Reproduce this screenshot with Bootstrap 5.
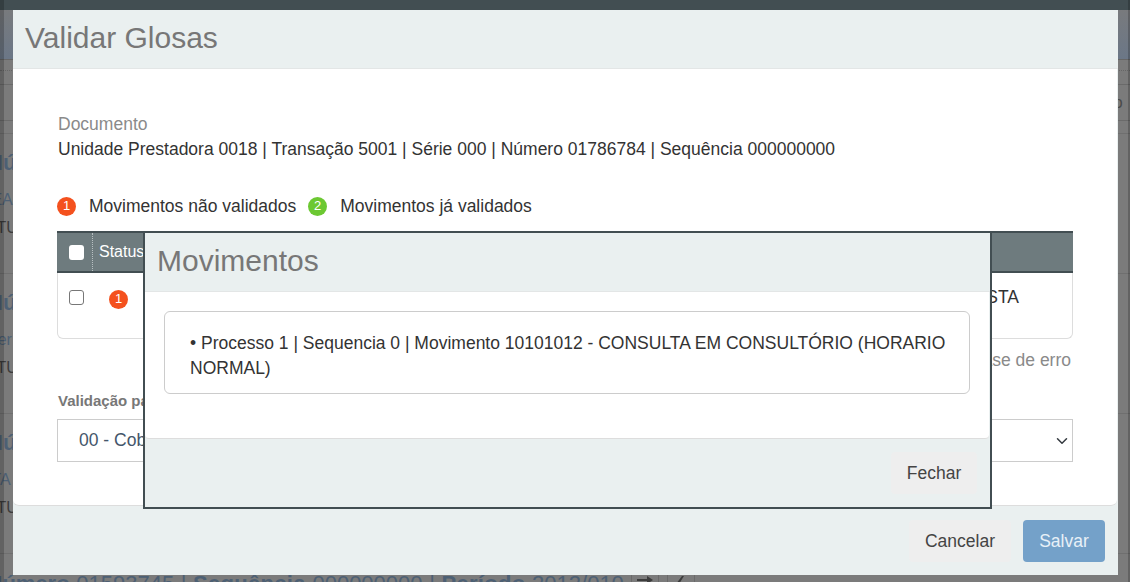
<!DOCTYPE html>
<html lang="pt-BR">
<head>
    <meta charset="UTF-8">
    <title>Validar Glosas</title>
    <link href="https://cdn.jsdelivr.net/npm/bootstrap@5.3.0/dist/css/bootstrap.min.css" rel="stylesheet">
    <style>
        html, body { height: 582px; overflow: hidden; }
        body { font-family: "Liberation Sans", Arial, sans-serif; font-size: 17.5px; color: #333; background: #7b7b7b; }

        /* page behind the dialogs */
        .page-behind { height: 582px; overflow: hidden; color: #4d6074; background: #7b7b7b; }
        .page-top { height: 60px; background: linear-gradient(#7b7b7b, #6b7787); border-bottom: 1px solid #666; }
        .bar-a { height: 11px; border-bottom: 1px dotted #666; }
        .bar-b { height: 14px; border-bottom: 1px solid #6a6a6a; }
        .bar-c { height: 36px; border-bottom: 1px solid #6a6a6a; text-align: right; padding-right: 3px; line-height: 36px; font-size: 16px; color: #4a4a4a; }
        .bar-d { height: 13px; border-bottom: 1px solid #6f6f6f; }
        .behind-row { height: 140px; padding-top: 16px; border-bottom: 1px solid #6f6f6f; margin-left: -13px; white-space: nowrap; }
        .behind-title { font-size: 22px; font-weight: 700; line-height: 26px; }
        .behind-line { font-size: 16px; line-height: 28px; }
        .behind-line.first { margin-top: 10px; }
        .behind-line.dark { color: #3c3c3c; }
        .behind-foot { margin: 18px 0 0 -13.5px; font-size: 22px; line-height: 24px; white-space: nowrap; display: flex; align-items: center; word-spacing: .5px; }
        .wide-bold { letter-spacing: .3px; }
        .foot-tool { width: 28px; height: 24px; border: 1px solid #6a6a6a; border-width: 0 1px; margin-left: 7px; display: inline-flex; align-items: flex-start; justify-content: center; padding-top: 4px; color: #3c3c3c; }

        .top-strip { position: fixed; top: 0; left: 0; width: 1130px; height: 10px; background: #424e52; }
        .edge-left { position: fixed; top: 0; left: 0; width: 4px; height: 582px; background: rgba(0, 0, 0, .2); }
        .edge-right { position: fixed; top: 0; left: 1128px; width: 2px; height: 582px; background: rgba(0, 0, 0, .2); }

        /* outer dialog */
        .dlg-outer { position: fixed; left: 13px; top: 10px; width: 1105px; height: 565px; background: #eaf0f0; display: flex; flex-direction: column; }
        .dlg-head { height: 59px; padding: 9px 12px; border-bottom: 1px solid #e3e6e6; flex: none; }
        .dlg-title { margin: 0; font-size: 30px; line-height: 38px; font-weight: 400; color: #777; }
        .dlg-body { height: 437px; flex: none; background: #fff; margin-right: 1px; border-radius: 0 0 6px 6px; border-bottom: 1px solid #ddd; padding: 45px 44px 0 44px; }
        .dlg-foot { flex: 1; padding: 14px 13px 0 0; }

        .doc-label { color: #8a8a8a; line-height: 20px; padding-left: 1px; }
        .doc-line { line-height: 26px; color: #333; margin-top: 2px; padding-left: 1px; }
        .legend-row { margin-top: 31px; height: 26px; }
        .legend-label { margin: 0 12px 0 13px; }
        .count-dot { width: 19px; height: 19px; border-radius: 50%; color: #fff; font-size: 13px; line-height: 18px; text-align: center; flex: none; }
        .dot-red { background: #f4511e; }
        .dot-green { background: #6cc832; }

        .move-table { margin-top: 12px; height: 108px; border: 1px solid #ddd; border-top: 0; border-radius: 0 0 6px 6px; }
        .move-table-head { height: 42px; background: #6e7b7e; border-top: 2px solid #424e52; border-bottom: 2px solid #424e52; color: #fff; margin: 0 -1px; }
        .cell-check { width: 36px; padding-left: 12px; border-right: 1px dotted #b8c0c2; }
        .cell-status { padding-left: 6px; line-height: 38px; font-size: 16px; }
        .fake-box { width: 15px; height: 15px; border-radius: 3px; flex: none; }
        .box-white { background: #fff; }
        .box-empty { background: #fff; border: 1px solid #777; margin-left: 11px; }
        .move-row { padding-top: 17px; }
        .dot-row { margin-left: 25px; }
        .row-text { margin-left: auto; padding-right: 53px; line-height: 20px; margin-top: -3px; }
        .err-link { text-align: right; color: #8a8a8a; line-height: 20px; margin-top: 11px; padding-right: 2px; }
        .field-label { font-size: 15px; font-weight: 700; color: #777; line-height: 20px; margin-top: 21px; padding-left: 1px; }
        .dlg-select.form-select { margin-top: 8px; height: 43px; border-radius: 0; border: 1px solid #ccc; color: #44566a; padding-left: 21px; font-size: 17.5px; background-position: right 3px center; background-size: 14px 12px; }

        .btn-soft { background: #eeeeee; color: #444; border: 0; width: 102px; height: 42px; border-radius: 4px; font-size: 17.5px; padding: 0; }
        .btn-save { background: #74a1c9; color: #e8f0f7; border: 0; width: 82px; height: 42px; border-radius: 4px; font-size: 17.5px; padding: 0; }

        /* inner dialog */
        .dlg-inner { position: fixed; left: 143px; top: 231px; width: 849px; height: 278px; background: #eaf0f0; border: 2px solid #424e52; display: flex; flex-direction: column; }
        .inner-head { height: 59px; padding: 9px 12px; border-bottom: 1px solid #e3e6e6; flex: none; }
        .inner-body { height: 147px; flex: none; background: #fff; border-bottom: 1px solid #ddd; border-radius: 0 0 4px 4px; margin-right: 1px; padding: 19px 19px 0 19px; }
        .inner-box { height: 83px; border: 1px solid #ccc; border-radius: 6px; padding: 19px 15px 0 25px; line-height: 25px; color: #333; }
        .inner-foot { flex: 1; padding: 13px 13px 0 0; }
        .btn-close-soft { width: 86px; }
    </style>
</head>
<body>
    <div class="page-behind">
        <div class="page-top"></div>
        <div class="bar-a"></div>
        <div class="bar-b"></div>
        <div class="bar-c">Usuário&nbsp;</div>
        <div class="bar-d"></div>
        <div class="behind-row">
            <div class="behind-title">Número</div>
            <div class="behind-line first">&nbsp;EA</div>
            <div class="behind-line dark">ATUAL</div>
        </div>
        <div class="behind-row">
            <div class="behind-title">Número</div>
            <div class="behind-line first">Ser</div>
            <div class="behind-line dark">ATUAL</div>
        </div>
        <div class="behind-row">
            <div class="behind-title">Número</div>
            <div class="behind-line first">&nbsp;TA</div>
            <div class="behind-line dark">ATUAL</div>
        </div>
        <div class="behind-foot">
            <span><b>Número</b> 01593745 | <b class="wide-bold">Sequência</b> 000000000 | <b class="wide-bold">Período</b> 2012/010</span>
            <span class="foot-tool"><svg width="16" height="8" viewBox="0 0 16 8"><path d="M0 3h10V0l6 4-6 4V5H0z" fill="currentColor"/></svg></span>
            <span class="foot-tool ms-2"><svg width="12" height="8" viewBox="0 0 12 8"><path d="M1 8 7 0h2L4 8z" fill="currentColor"/></svg></span>
        </div>
    </div>
    <div class="top-strip"></div>
    <div class="edge-left"></div>
    <div class="edge-right"></div>

    <div class="dlg-outer">
        <div class="dlg-head"><h4 class="dlg-title">Validar Glosas</h4></div>
        <div class="dlg-body">
            <div class="doc-label">Documento</div>
            <div class="doc-line">Unidade Prestadora 0018 | Transação 5001 | Série 000 | Número 01786784 | Sequência 000000000</div>
            <div class="legend-row d-flex align-items-center">
                <span class="count-dot dot-red">1</span>
                <span class="legend-label">Movimentos não validados</span>
                <span class="count-dot dot-green">2</span>
                <span class="legend-label">Movimentos já validados</span>
            </div>
            <div class="move-table">
                <div class="move-table-head d-flex">
                    <div class="cell-check d-flex align-items-center"><span class="fake-box box-white"></span></div>
                    <div class="cell-status">Status</div>
                </div>
                <div class="move-row d-flex align-items-start">
                    <span class="fake-box box-empty"></span>
                    <span class="count-dot dot-red dot-row">1</span>
                    <span class="row-text">ESPECIALISTA</span>
                </div>
            </div>
            <div class="err-link">Mostrar frase de erro</div>
            <div class="field-label">Validação para todos</div>
            <select class="form-select dlg-select"><option>00 - Cobrança normal</option></select>
        </div>
        <div class="dlg-foot d-flex justify-content-end gap-2">
            <button class="btn-soft me-1">Cancelar</button>
            <button class="btn-save">Salvar</button>
        </div>
    </div>

    <div class="dlg-inner">
        <div class="inner-head"><h4 class="dlg-title">Movimentos</h4></div>
        <div class="inner-body">
            <div class="inner-box">• Processo 1 | Sequencia 0 | Movimento 10101012 - CONSULTA EM CONSULTÓRIO (HORARIO NORMAL)</div>
        </div>
        <div class="inner-foot d-flex justify-content-end">
            <button class="btn-soft btn-close-soft">Fechar</button>
        </div>
    </div>
    <script src="https://cdn.jsdelivr.net/npm/bootstrap@5.3.0/dist/js/bootstrap.bundle.min.js"></script>
</body>
</html>
